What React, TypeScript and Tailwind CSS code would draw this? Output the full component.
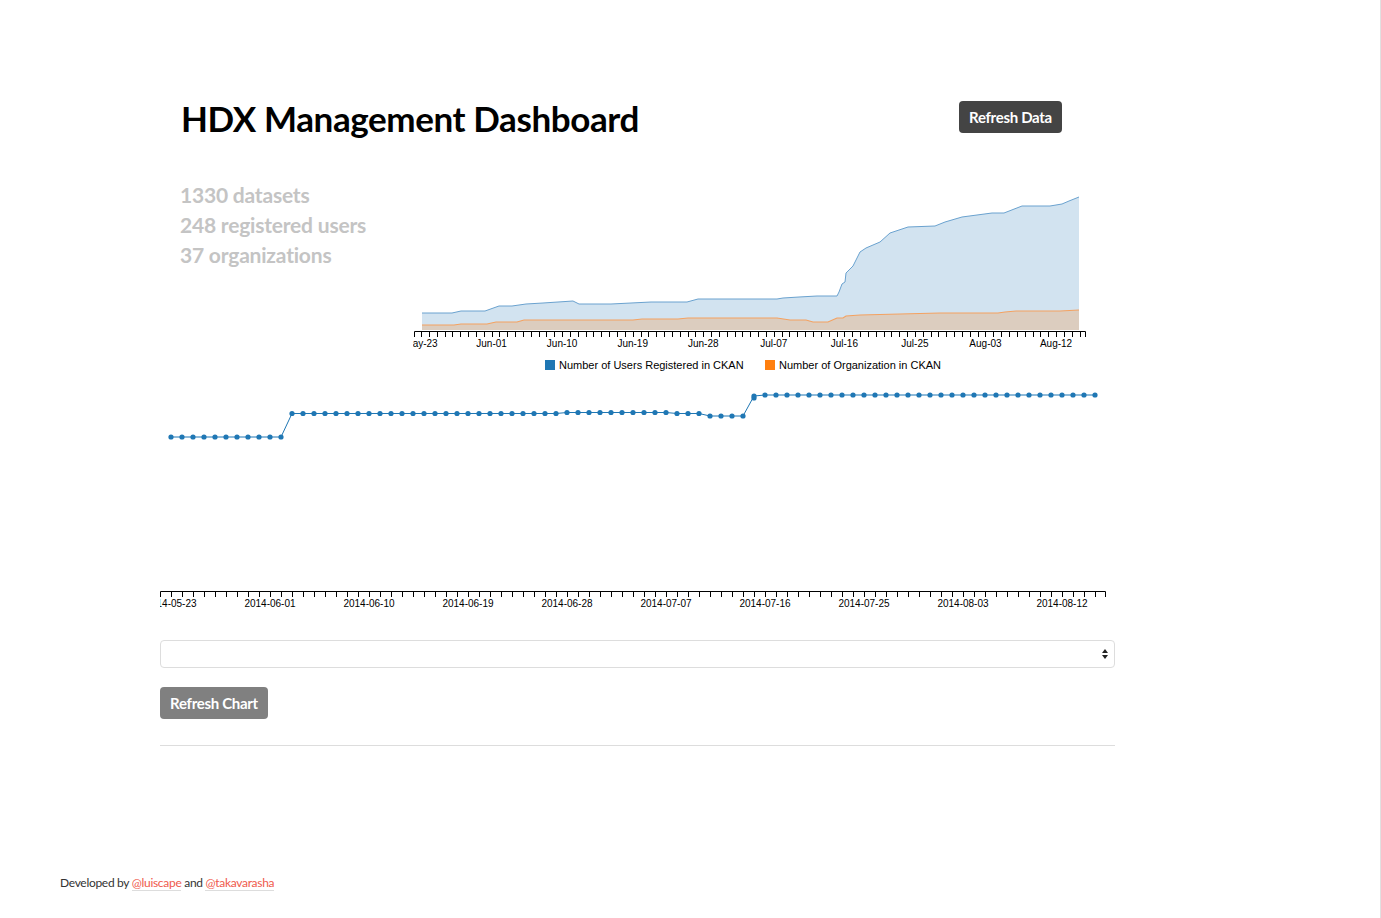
const usersLine: [number, number][] = [
  [422, 313], [452, 313], [461, 311], [485, 311], [499, 306], [512, 306], [526, 304], [543, 303],
  [573, 301], [579, 304], [611, 304], [651, 302], [687, 302], [698, 299], [777, 299], [783, 298],
  [799, 297], [817, 296], [837, 296], [839, 292], [842, 284], [845, 282], [846, 273], [853, 266],
  [860, 252], [866, 248], [880, 242], [890, 233], [908, 227], [935, 226], [945, 222], [962, 217],
  [992, 213], [1004, 213], [1022, 206], [1050, 206], [1062, 204], [1069, 201], [1079, 197],
];

const orgsLine: [number, number][] = [
  [422, 325], [454, 325], [461, 324], [487, 324], [496, 322], [517, 322], [524, 320], [633, 320],
  [642, 319], [678, 319], [688, 318], [777, 318], [790, 320], [806, 320], [813, 322], [828, 322],
  [837, 318], [843, 318], [846, 316], [860, 315], [900, 314], [940, 313], [998, 313], [1005, 312],
  [1016, 311], [1060, 311], [1079, 310],
];

const BASE = 330;

const linePath = (pts: [number, number][]) => "M" + pts.map(([x, y]) => `${x},${y}`).join("L");
const areaPath = (pts: [number, number][]) =>
  linePath(pts) + `L${pts[pts.length - 1][0]},${BASE}L${pts[0][0]},${BASE}Z`;

const shortLabels = ["May-23", "Jun-01", "Jun-10", "Jun-19", "Jun-28", "Jul-07", "Jul-16", "Jul-25", "Aug-03", "Aug-12"];
const longLabels = [
  "2014-05-23", "2014-06-01", "2014-06-10", "2014-06-19", "2014-06-28",
  "2014-07-07", "2014-07-16", "2014-07-25", "2014-08-03", "2014-08-12",
];

const days = Array.from({ length: 85 }, (_, d) => d);

// registered users per day, small chart
const dotY = (d: number) => {
  if (d <= 10) return 437;
  if (d <= 35) return 413.5;
  if (d <= 45) return 412.5;
  if (d <= 48) return 413.5;
  if (d <= 52) return 416;
  if (d === 53) return 396;
  return 395;
};

function AreaChart() {
  const x = (d: number) => 421 + d * 7.84;
  return (
    <svg width={702} height={200} viewBox="413 180 702 200" className="block shrink-0">
      <path d={areaPath(usersLine)} fill="#d2e3f0" />
      <path d={areaPath(orgsLine)} fill="#dccdbf" />
      <path d={linePath(usersLine)} fill="none" stroke="#6aa2cf" strokeWidth={1} />
      <path d={linePath(orgsLine)} fill="none" stroke="#f4a261" strokeWidth={1.2} />
      <path d="M414.5,337V331.5H1085.5V337" fill="none" stroke="#000" strokeWidth={1} />
      {days.map((d) => (
        <line key={d} x1={Math.round(x(d)) + 0.5} x2={Math.round(x(d)) + 0.5} y1={331} y2={337} stroke="#000" strokeWidth={1} />
      ))}
      {shortLabels.map((l, i) => (
        <text key={l} x={x(i * 9)} y={347} textAnchor="middle" fontSize={10} fontFamily="'Liberation Sans', Arial, sans-serif" fill="#000">
          {l}
        </text>
      ))}
      <rect x={545} y={360} width={10} height={10} fill="#1f77b4" />
      <text x={559} y={369} fontSize={11} fontFamily="'Liberation Sans', Arial, sans-serif" fill="#000">
        Number of Users Registered in CKAN
      </text>
      <rect x={765} y={360} width={10} height={10} fill="#ff7f0e" />
      <text x={779} y={369} fontSize={11} fontFamily="'Liberation Sans', Arial, sans-serif" fill="#000">
        Number of Organization in CKAN
      </text>
    </svg>
  );
}

function DotChart() {
  const x = (d: number) => 171 + d * 11;
  const pts = days.map((d) => [x(d), dotY(d)] as [number, number]);
  return (
    <svg width={955} height={240} viewBox="160 380 955 240" className="block">
      <path d={linePath(pts)} fill="none" stroke="#1f77b4" strokeWidth={1} />
      {pts.map(([cx, cy], i) => (
        <circle key={i} cx={cx} cy={cy} r={2.6} fill="#1f77b4" />
      ))}
      <circle cx={x(53)} cy={398} r={2.6} fill="#1f77b4" />
      <path d="M160.5,597V591.5H1105.5V597" fill="none" stroke="#000" strokeWidth={1} />
      {days.map((d) => (
        <line key={d} x1={x(d) + 0.5} x2={x(d) + 0.5} y1={591} y2={597} stroke="#000" strokeWidth={1} />
      ))}
      {longLabels.map((l, i) => (
        <text key={l} x={x(i * 9)} y={607} textAnchor="middle" fontSize={10} fontFamily="'Liberation Sans', Arial, sans-serif" fill="#000">
          {l}
        </text>
      ))}
    </svg>
  );
}

export default function App() {
  return (
    <div className="min-h-[918px] w-full border-r border-[#e0e0e0] bg-white font-['Lato',sans-serif]">
      <div className="ml-[160px] w-[955px]">
        <div className="flex items-start justify-between pr-[53px] pt-[100px]">
          <h1 className="pl-[21px] text-[35px] font-bold leading-[36px] tracking-[-0.4px] text-black">
            HDX Management Dashboard
          </h1>
          <button className="mt-px h-[32px] w-[103px] rounded bg-[#444] text-[15px] font-bold tracking-[-0.3px] text-white">
            Refresh Data
          </button>
        </div>

        <div className="mt-[44px] flex">
          <div className="w-[253px] pl-[20px] text-[21px] font-bold leading-[30px] tracking-[-0.2px] text-[#c4c4c4]">
            <div>1330 datasets</div>
            <div>248 registered users</div>
            <div>37 organizations</div>
          </div>
          <AreaChart />
        </div>

        <DotChart />

        <div className="mt-[20px] flex h-[28px] items-center justify-end rounded border border-[#dddddd] pr-[6px]">
          <svg width="6" height="10" viewBox="0 0 6 10">
            <path d="M3,0L6,4H0Z" fill="#222" />
            <path d="M3,10L6,6H0Z" fill="#222" />
          </svg>
        </div>

        <button className="mt-[19px] h-[32px] w-[108px] rounded bg-[#808080] text-[15px] font-bold tracking-[-0.3px] text-white">
          Refresh Chart
        </button>

        <div className="mt-[26px] h-px bg-[#dddddd]" />
      </div>

      <div className="mt-[129px] pl-[60px] text-[12px] leading-[16px] tracking-[-0.3px] text-[#333]">
        Developed by{" "}
        <a className="border-b border-[#ddd] text-[#ef5a4c]" href="#">
          @luiscape
        </a>{" "}
        and{" "}
        <a className="border-b border-[#ddd] text-[#ef5a4c]" href="#">
          @takavarasha
        </a>
      </div>
    </div>
  );
}
